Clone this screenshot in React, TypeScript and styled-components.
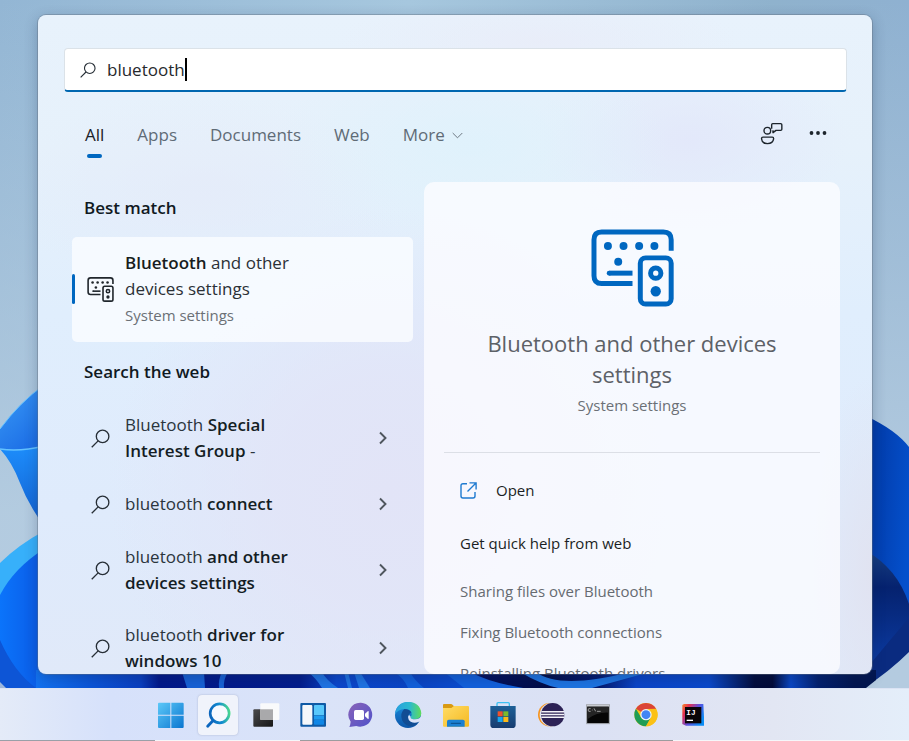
import React, { useState } from "react";
import styled, { createGlobalStyle } from "styled-components";

const GlobalStyle = createGlobalStyle`
  *, *::before, *::after { box-sizing: border-box; }
  body { margin: 0; background: #9fc0d9; font-family: "Open Sans", "Noto Sans", sans-serif; color: #1b2127; }
  button { font: inherit; color: inherit; border: 0; padding: 0; background: none; cursor: pointer; }
  svg { display: block; flex: none; }
`;

const blue = "#0067c0";

const Desktop = styled.div`
  display: grid;
  grid-template: minmax(0, 1fr) 53px / minmax(0, 1fr);
  height: 100vh;
  overflow: hidden;
`;

const WallpaperLayer = styled.div`
  grid-area: 1 / 1;
  min-height: 0;
  overflow: hidden;

  svg { width: 100%; height: 100%; }
`;

const Panel = styled.main`
  grid-area: 1 / 1;
  z-index: 1;
  display: flex;
  flex-direction: column;
  min-height: 0;
  margin: 15px 37px 14px 38px;
  overflow: hidden;
  border-radius: 8px;
  background:
    radial-gradient(200px 100px at 52% 20%, rgba(221, 242, 252, 0.7), transparent),
    radial-gradient(160px 90px at 78% 19%, rgba(226, 230, 250, 0.8), transparent),
    radial-gradient(200px 50px at 60% 4%, rgba(233, 234, 247, 0.6), transparent),
    radial-gradient(200px 100px at 20% 27%, rgba(229, 233, 248, 0.6), transparent),
    radial-gradient(280px 280px at 42% 72%, rgba(226, 228, 247, 1), rgba(226, 228, 247, 0.8) 40%, transparent),
    radial-gradient(60px 200px at 100% 85%, rgba(225, 227, 241, 1), transparent),
    linear-gradient(180deg, #e8f2fc 0%, #e6f1fb 20%, #e0eefd 45%, #dfebfc 75%, #e0e9f9 100%);
  box-shadow: 0 0 0 1px rgba(100, 112, 128, 0.4), 0 4px 14px rgba(20, 40, 80, 0.3);
`;

const SearchBox = styled.label`
  display: flex;
  align-items: center;
  flex: none;
  height: 44px;
  margin: 33px 25px 0 26px;
  padding: 0 16px 0 15px;
  border: 1px solid #dbe2e8;
  border-bottom: 2px solid #0067b0;
  border-radius: 4px;
  background: #fff;
`;

const SearchInput = styled.input`
  field-sizing: content;
  max-width: 90%;
  margin-left: 11px;
  padding: 1px 0 0;
  border: 0;
  outline: 0;
  background: transparent;
  caret-color: transparent;
  font: 17px/24px "Open Sans", "Noto Sans", sans-serif;
  color: #26292c;
`;

const Caret = styled.span`
  width: 2px;
  height: 23px;
  background: #000;
`;

const Toolbar = styled.div`
  display: flex;
  flex: none;
  align-items: center;
  height: 90px;
  padding: 0 45px 0 47px;
`;

const Tabs = styled.nav`
  display: flex;
  flex: 1;
  gap: 33px;
  margin-top: 6px;
`;

const Tab = styled.button<{ $active?: boolean }>`
  display: flex;
  flex-direction: column;
  align-items: center;
  gap: 6px;
  height: 36px;
  font-size: 17px;
  line-height: 26px;
  color: ${(p) => (p.$active ? "#1b2127" : "#5f6b76")};

  &::after {
    content: "";
    width: 15px;
    height: 4px;
    border-radius: 2px;
    background: ${(p) => (p.$active ? blue : "transparent")};
  }
`;

const TabLabel = styled.span`
  display: flex;
  align-items: center;
  gap: 7px;
`;

const ToolbarActions = styled.div`
  display: flex;
  align-items: center;
  gap: 26px;
  margin-bottom: 8px;
`;

const Columns = styled.div`
  display: grid;
  grid-template-columns: minmax(0, 341fr) minmax(0, 416fr);
  gap: 11px;
  flex: 1;
  min-height: 0;
  padding: 0 32px 0 34px;
`;

const Results = styled.section`
  min-height: 0;
  overflow: hidden;
`;

const GroupHeading = styled.h2<{ $first?: boolean }>`
  margin: 0;
  padding: ${(p) => (p.$first ? "13px 12px 16px" : "17px 12px 14px")};
  font-size: 17px;
  line-height: 26px;
  font-weight: 600;
  color: #10191f;
`;

const BestMatch = styled.button`
  display: flex;
  align-items: center;
  width: 100%;
  padding: 13px 16px 14px 0;
  border-radius: 5px;
  background: rgba(250, 252, 255, 0.82);
  text-align: left;
`;

const Accent = styled.span`
  width: 3px;
  height: 30px;
  margin-right: 12px;
  border-radius: 2px;
  background: ${blue};
`;

const MatchText = styled.span`
  display: block;
  width: 200px;
  margin-left: 11px;
  font-size: 17px;
  line-height: 26px;
  color: #2b3036;

  strong { font-weight: 600; color: #171c20; }
`;

const Caption = styled.span`
  display: block;
  font-size: 15px;
  line-height: 26px;
  color: #6b7076;
`;

const SuggestionRow = styled.button`
  display: flex;
  align-items: center;
  width: 100%;
  min-height: 54px;
  padding: 13px 25px 13px 19px;
  text-align: left;
  font-size: 17px;
  line-height: 26px;
  color: #2b353d;

  strong { font-weight: 600; color: #141d24; }
`;

const SuggestionText = styled.span`
  width: 180px;
  margin: 0 auto 0 15px;
`;

const Preview = styled.section`
  display: flex;
  flex-direction: column;
  min-height: 0;
  overflow: hidden;
  padding: 47px 20px 0;
  border-radius: 10px;
  background: rgba(252, 252, 255, 0.78);
`;

const PreviewHero = styled.header`
  display: flex;
  flex: none;
  flex-direction: column;
  align-items: center;
  padding-bottom: 34px;
  border-bottom: 1px solid #dcdfe6;
  text-align: center;
`;

const PreviewTitle = styled.h1`
  width: 320px;
  margin: 21px 0 2px;
  font-size: 22px;
  line-height: 31px;
  font-weight: 400;
  color: #5d6167;
`;

const OpenButton = styled.button`
  display: flex;
  align-items: center;
  flex: none;
  gap: 19px;
  margin: 24px 16px 0;
  font-size: 15px;
  line-height: 26px;
  color: #1b1f24;
`;

const HelpHeading = styled.h3`
  margin: 27px 16px 15px;
  font-size: 15px;
  line-height: 26px;
  font-weight: 400;
  color: #1b1f24;
`;

const HelpLink = styled.a`
  flex: none;
  margin: 0 16px;
  font-size: 15px;
  line-height: 41px;
  color: #666b71;
  text-decoration: none;
`;

const Taskbar = styled.footer`
  grid-area: 2 / 1;
  z-index: 1;
  display: flex;
  flex-direction: column;
  background: linear-gradient(90deg, #e4ebf8 0%, #d6e1fb 12%, #dae3f8 35%, #dbe1f4 65%, #e2e6f3 85%, #e4eefa 100%);
  border-top: 1px solid #dbe3f4;
`;

const TaskbarInner = styled.div`
  display: flex;
  flex: 1;
  justify-content: center;
  padding-right: 45px;
`;

const TaskbarItems = styled.div`
  display: flex;
  flex: 0 1 562px;
  justify-content: space-between;
  align-items: center;
`;

const TaskbarEdge = styled.div`
  height: 1px;
  background: linear-gradient(90deg, #9aa0a8 17%, #f5f7fa 17%, #f5f7fa 33%, #9c9c9e 33%, #9c9c9e 74%, #f5f7fa 74%);
`;

const AppButton = styled.button<{ $active?: boolean }>`
  display: grid;
  place-items: center;
  width: 40px;
  height: 40px;
  border-radius: 4px;
  background: ${(p) => (p.$active ? "#f0f3fb" : "transparent")};
  box-shadow: ${(p) => (p.$active ? "0 0 2px rgba(80, 90, 120, 0.35)" : "none")};
`;

const Wallpaper = () => (
  <WallpaperLayer>
    <svg viewBox="0 0 909 688" preserveAspectRatio="none" aria-hidden="true">
      <defs>
        <linearGradient id="sky" x1="0" x2="1">
          <stop offset="0" stopColor="#93b6d4" />
          <stop offset=".45" stopColor="#a6c7de" />
          <stop offset=".85" stopColor="#8fb2cd" />
          <stop offset="1" stopColor="#8fb1d1" />
        </linearGradient>
        <linearGradient id="haze" x1="0" x2="0" y1="0" y2="1">
          <stop offset="0" stopColor="#b9cfe0" stopOpacity="0" />
          <stop offset=".75" stopColor="#b9cfe2" stopOpacity=".85" />
          <stop offset="1" stopColor="#b4cbe0" />
        </linearGradient>
        <linearGradient id="petalA" x1="0" y1="0" x2=".6" y2="1">
          <stop offset="0" stopColor="#3a9bf6" />
          <stop offset="1" stopColor="#1d6fe6" />
        </linearGradient>
        <linearGradient id="petalB" x1="0" x2="0" y1="0" y2="1">
          <stop offset="0" stopColor="#1d8dfb" />
          <stop offset="1" stopColor="#1260d0" />
        </linearGradient>
        <linearGradient id="petalC" x1="0" x2="1">
          <stop offset="0" stopColor="#0b74fb" />
          <stop offset="1" stopColor="#0b50dc" />
        </linearGradient>
        <linearGradient id="petalR" x1="0" x2="1" y1="0" y2=".4">
          <stop offset="0" stopColor="#01339c" />
          <stop offset="1" stopColor="#0450cc" />
        </linearGradient>
        <linearGradient id="petalRInner" x1="0" x2="0" y1="0" y2="1">
          <stop offset="0" stopColor="#173f80" />
          <stop offset=".3" stopColor="#05226f" />
          <stop offset="1" stopColor="#0c3da6" />
        </linearGradient>
        <linearGradient id="floor" gradientUnits="userSpaceOnUse" x1="0" x2="909" y1="0" y2="0">
          <stop offset=".04" stopColor="#1272f0" />
          <stop offset=".1" stopColor="#0b55d8" />
          <stop offset=".155" stopColor="#0a3fc0" />
          <stop offset=".175" stopColor="#02188a" />
          <stop offset=".33" stopColor="#021c8c" />
          <stop offset=".37" stopColor="#0b47cc" />
          <stop offset=".46" stopColor="#0a44c4" />
          <stop offset=".51" stopColor="#0a4cd0" />
          <stop offset=".53" stopColor="#020f5c" />
          <stop offset=".6" stopColor="#020c48" />
          <stop offset=".66" stopColor="#041a70" />
          <stop offset=".7" stopColor="#0a44c8" />
          <stop offset=".78" stopColor="#0a49cb" />
          <stop offset=".83" stopColor="#020c3c" />
          <stop offset=".85" stopColor="#020a38" />
          <stop offset=".87" stopColor="#0a47c4" />
          <stop offset=".9" stopColor="#03206e" />
          <stop offset=".94" stopColor="#02154f" />
        </linearGradient>
      </defs>
      <rect width="909" height="688" fill="url(#sky)" />
      <rect width="909" height="688" fill="url(#haze)" />
      <path d="M44 385Q20 402 0 429V449Q20 452 44 447Z" fill="url(#petalA)" />
      <path d="M0 449Q12 462 20 483T44 526V446Q20 452 0 449Z" fill="url(#petalB)" />
      <path d="M0 449Q20 452 44 446" fill="none" stroke="#63c2ff" strokeWidth="1.5" />
      <path d="M0 429Q20 402 44 385" fill="none" stroke="#63c2ff" />
      <path d="M44 531Q18 545 0 563V688H60V531Z" fill="#37b0fa" />
      <path d="M44 549Q14 568 0 595V688H60V545Z" fill="url(#petalC)" />
      <path d="M0 640Q14 672 36 688H0Z" fill="#0d55d6" />
      <path d="M0 682L6 688H0Z" fill="#9db7dc" />
      <path d="M866 416Q896 430 909 447V640Q890 660 864 688H860V416Z" fill="url(#petalR)" />
      <path d="M866 551Q897 568 909 604V620Q890 655 866 672Z" fill="url(#petalRInner)" />
      <path d="M909 618Q890 640 872 662L840 688H864Q890 671 909 652Z" fill="#0a2b80" />
      <path d="M36 670H876V680L866 688H36Z" fill="url(#floor)" />
      <path d="M182 672H204L205 688H187ZM219 688Q218 680 222 672H228Q223 680 224 688Z" fill="#1762d6" />
      <path d="M308 672Q316 678 322 688H338Q326 680 322 672ZM344 672L348 688H352L348 672ZM354 672L359 688H370L360 672Z" fill="#1f74e4" />
      <path d="M394 672Q404 678 408 688H424Q414 680 410 672ZM444 672L464 688H590L640 672Q600 688 560 692Q500 688 470 672Z" fill="#1260dc" />
      <path d="M520 672Q560 696 592 688L650 672H630Q560 690 536 672Z" fill="#1d74e2" />
    </svg>
  </WallpaperLayer>
);

const SearchIcon = ({ size }: { size: number }) => (
  <svg width={size} height={size} viewBox="0 0 20 20" fill="none" stroke="#262e36" strokeWidth="1.4" aria-hidden="true">
    <circle cx="12.2" cy="7.8" r="6.6" />
    <path d="M7.5 12.5L.8 19.2" />
  </svg>
);

const DevicesIcon = ({ width, height, color }: { width: number; height: number; color: string }) => (
  <svg width={width} height={height} viewBox="30 26 250 234" fill="none" stroke={color} strokeWidth="15" aria-hidden="true">
    <path d="M155 189.500H62Q39 189.500 39 166V58Q39 34.500 62 34.500H248Q271.500 34.500 271.500 58V91" />
    <path d="M85 158.500H155" strokeLinecap="butt" />
    <circle cx="85" cy="158.500" r="7.500" fill={color} stroke="none" />
    <rect x="178.500" y="112.500" width="93" height="139" rx="16" />
    <circle cx="225" cy="158.500" r="15.500" />
    <g fill={color} stroke="none">
      <circle cx="81" cy="77" r="12" />
      <circle cx="128" cy="77" r="12" />
      <circle cx="175" cy="77" r="12" />
      <circle cx="221" cy="77" r="12" />
      <circle cx="112" cy="124" r="12" />
      <circle cx="225" cy="213" r="15.500" />
    </g>
  </svg>
);

const ChevronDown = () => (
  <svg width="11" height="7" viewBox="0 0 11 7" fill="none" stroke="#6f7a84" aria-hidden="true">
    <path d="M.7 1L5.500 5.800L10.300 1" />
  </svg>
);

const ChevronRight = () => (
  <svg width="10" height="14" viewBox="0 0 10 14" fill="none" stroke="#4f565e" strokeWidth="1.900" aria-hidden="true">
    <path d="M2 1.500L7.500 7L2 12.500" />
  </svg>
);

const FeedbackIcon = () => (
  <svg width="23" height="23" viewBox="0 0 69 69" fill="none" stroke="#1d252c" strokeWidth="4.200" strokeLinejoin="round" aria-hidden="true">
    <circle cx="22" cy="26" r="10" />
    <path d="M9 45.500H37Q41 45.500 41 50Q39 65 22.500 65Q6 65 4.500 50Q4.500 45.500 9 45.500Z" />
    <path d="M35 20V8Q35 5 38 5H62Q65.500 5 65.500 8V22Q65.500 25 62 25H48L39 32V25" />
  </svg>
);

const MoreIcon = () => (
  <svg width="18" height="6" viewBox="0 0 18 6" fill="#1d252c" aria-hidden="true">
    <circle cx="2.500" cy="3" r="1.900" />
    <circle cx="9" cy="3" r="1.900" />
    <circle cx="15.500" cy="3" r="1.900" />
  </svg>
);

const OpenIcon = () => (
  <svg width="17" height="17" viewBox="0 0 17 17" fill="none" stroke="#1f7ad0" strokeWidth="1.400" aria-hidden="true">
    <path d="M7 1.700H3Q1 1.700 1 3.700V14Q1 16 3 16H13Q15 16 15 14V10" />
    <path d="M9.500 .9H16.100V7.500M16 1L7.500 9.500" />
  </svg>
);

const AppIcon = ({ x, children }: { x: number; children: React.ReactNode }) => (
  <svg width="28" height="28" viewBox={`${x - 42} 63 84 84`} aria-hidden="true">
    {children}
  </svg>
);

const apps: { name: string; active?: boolean; icon: React.ReactNode }[] = [
  {
    name: "Start",
    icon: (
      <AppIcon x={93}>
        <defs>
          <linearGradient id="win" x1="54" y1="68" x2="131" y2="144" gradientUnits="userSpaceOnUse">
            <stop stopColor="#5cc8f8" />
            <stop offset="1" stopColor="#0a76d0" />
          </linearGradient>
        </defs>
        <path fill="url(#win)" d="M54 71Q54 68 57 68H91V104H54ZM94 68H128Q131 68 131 71V104H94ZM54 107H91V144H57Q54 144 54 141ZM94 107H131V141Q131 144 128 144H94Z" />
      </AppIcon>
    ),
  },
  {
    name: "Search",
    active: true,
    icon: (
      <AppIcon x={235}>
        <defs>
          <linearGradient id="lens" x1="206" y1="110" x2="273" y2="98" gradientUnits="userSpaceOnUse">
            <stop stopColor="#0b5fb8" />
            <stop offset=".55" stopColor="#118bd0" />
            <stop offset="1" stopColor="#4fe08a" />
          </linearGradient>
        </defs>
        <circle cx="240" cy="100" r="28.500" fill="#f7faff" stroke="url(#lens)" strokeWidth="8" />
        <path d="M219 123L204 139" stroke="#0b66bf" strokeWidth="8.500" strokeLinecap="round" />
      </AppIcon>
    ),
  },
  {
    name: "Task view",
    icon: (
      <AppIcon x={377}>
        <defs>
          <linearGradient id="tv" x1="0" y1="0" x2="1" y2="1">
            <stop stopColor="#4a4a4c" />
            <stop offset="1" stopColor="#161617" />
          </linearGradient>
        </defs>
        <rect x="339" y="88" width="59" height="52" rx="3" fill="url(#tv)" />
        <rect x="360" y="70" width="57" height="50" rx="3" fill="#fbfbfb" opacity=".94" />
        <rect x="360" y="88" width="38" height="32" fill="#a9a9ab" />
      </AppIcon>
    ),
  },
  {
    name: "Widgets",
    icon: (
      <AppIcon x={521}>
        <rect x="483" y="69" width="77" height="71" rx="3" fill="#0f5aa5" />
        <rect x="489" y="75" width="30" height="59" rx="3" fill="#f4f7fa" />
        <rect x="524" y="75" width="30" height="31" rx="2" fill="#58c8fb" />
        <rect x="524" y="107" width="30" height="12" fill="#1e9cf0" />
        <rect x="524" y="120" width="30" height="14" rx="2" fill="#0f86e6" />
      </AppIcon>
    ),
  },
  {
    name: "Chat",
    icon: (
      <AppIcon x={662}>
        <defs>
          <linearGradient id="chat" x1="0" y1="0" x2="1" y2="1">
            <stop stopColor="#8a63b8" />
            <stop offset="1" stopColor="#4f52c9" />
          </linearGradient>
        </defs>
        <path fill="url(#chat)" d="M662 68A36 36 0 1 1 648 138L627 141Q630 134 631 125A36 36 0 0 1 662 68Z" />
        <rect x="641" y="90" width="30" height="30" rx="5" fill="#fff" />
        <path d="M674 101L683 93Q685 92 685 95V115Q685 118 683 117L674 109Z" fill="#fff" />
      </AppIcon>
    ),
  },
  {
    name: "Edge",
    icon: (
      <AppIcon x={805}>
        <defs>
          <linearGradient id="edgeTop" x1="766" y1="90" x2="845" y2="90" gradientUnits="userSpaceOnUse">
            <stop stopColor="#2a9fdf" />
            <stop offset=".55" stopColor="#2bb9cf" />
            <stop offset="1" stopColor="#5fdc5a" />
          </linearGradient>
          <linearGradient id="edgeLeft" x1="0" y1="0" x2="0" y2="1">
            <stop stopColor="#1b8fe0" />
            <stop offset="1" stopColor="#0c55a8" />
          </linearGradient>
        </defs>
        <circle cx="805" cy="105" r="39" fill="url(#edgeLeft)" />
        <path fill="url(#edgeTop)" d="M766 102Q770 67 806 66Q841 67 845 100Q844 117 826 118Q811 118 813 110Q818 106 815 97Q808 87 794 87Q776 88 766 102Z" />
        <path fill="#114d94" d="M794 87Q779 100 788 122Q798 141 822 138Q833 133 838 124Q822 131 811 123Q802 115 808 103Q812 98 815 97Q808 87 794 87Z" />
        <path fill="#dbe3f8" d="M845 106Q842 118 826 118Q811 118 813 110Q808 103 806 108Q803 118 813 125Q825 131 838 125Q840 127 848 118Z" />
      </AppIcon>
    ),
  },
  {
    name: "File Explorer",
    icon: (
      <AppIcon x={78}>
        <defs>
          <linearGradient id="folder" x1="0" y1="0" x2="1" y2="1">
            <stop stopColor="#ffdc66" />
            <stop offset="1" stopColor="#f5b921" />
          </linearGradient>
        </defs>
        <path d="M39 75Q39 72 42 72H62Q66 72 69 76L73 80V92H39Z" fill="#d99a12" />
        <path d="M39 84H64L72 78H114Q117 78 117 81V137Q117 140 114 140H42Q39 140 39 137Z" fill="url(#folder)" />
        <path d="M51 140V124Q51 119 56 119H99Q104 119 104 124V140Z" fill="#1a80d2" />
        <rect x="62" y="128" width="31" height="4" rx="2" fill="#0c5595" />
      </AppIcon>
    ),
  },
  {
    name: "Microsoft Store",
    icon: (
      <AppIcon x={219}>
        <defs>
          <linearGradient id="store" x1="0" y1="0" x2="0" y2="1">
            <stop stopColor="#1e6097" />
            <stop offset="1" stopColor="#173c70" />
          </linearGradient>
        </defs>
        <path d="M201 82V71Q201 68 204 68H235Q238 68 238 71V82" fill="none" stroke="#3cc0f2" strokeWidth="4" />
        <path d="M181 78H257V134Q257 144 247 144H191Q181 144 181 134Z" fill="url(#store)" />
        <rect x="203" y="94" width="15" height="15" fill="#f0522a" />
        <rect x="220" y="94" width="15" height="15" fill="#7dba2a" />
        <rect x="203" y="111" width="15" height="15" fill="#1aa5ee" />
        <rect x="220" y="111" width="15" height="15" fill="#fcba18" />
      </AppIcon>
    ),
  },
  {
    name: "Eclipse",
    icon: (
      <AppIcon x={362}>
        <circle cx="358" cy="104" r="35" fill="#f7941e" />
        <circle cx="363" cy="104" r="35" fill="#dfe2ef" />
        <circle cx="367" cy="104" r="35" fill="#2c2255" />
        <path d="M333 95H401M332 103.500H402M333 112H401" stroke="#f3f2f8" strokeWidth="4.500" />
      </AppIcon>
    ),
  },
  {
    name: "Command Prompt",
    icon: (
      <AppIcon x={504}>
        <rect x="470" y="74" width="68" height="57" fill="#050505" stroke="#a9adb3" strokeWidth="3" />
        <rect x="471" y="74" width="66" height="6" fill="#c9ccd1" />
        <path d="M472 118Q500 96 536 98V80H472Z" fill="#242424" />
        <path d="M482 86H477Q475 86 475 88V92Q475 94 477 94H482M487 88V89M487 92V93M492 85L497 94M501 94H512" stroke="#d8d8d8" strokeWidth="2" fill="none" />
      </AppIcon>
    ),
  },
  {
    name: "Chrome",
    icon: (
      <AppIcon x={646}>
        <circle cx="646" cy="104" r="35" fill="#fbc116" />
        <path d="M646 104L615.700 86.500A35 35 0 0 1 676.300 86.500L646 87Z" fill="#db4437" />
        <path d="M615.700 86.500A35 35 0 0 0 646 139L661 112L646 104L631 112Z" fill="#1f9d55" />
        <path d="M646 87H676.300A35 35 0 0 1 646 139L661 112.500Z" fill="#fbc116" />
        <circle cx="646" cy="104" r="17" fill="#f2f5f8" />
        <circle cx="646" cy="104" r="13.500" fill="#4285f4" />
      </AppIcon>
    ),
  },
  {
    name: "IntelliJ IDEA",
    icon: (
      <AppIcon x={789}>
        <defs>
          <linearGradient id="ij" x1="0" y1="0" x2="1" y2=".6">
            <stop stopColor="#f58a2a" />
            <stop offset=".25" stopColor="#e8304f" />
            <stop offset=".6" stopColor="#5a50e0" />
            <stop offset="1" stopColor="#0a8cf5" />
          </linearGradient>
        </defs>
        <path d="M757 75L762 72H820L822 110V137H768L757 132Z" fill="url(#ij)" />
        <rect x="765" y="81" width="49" height="49" fill="#0a0508" />
        <rect x="770" y="119" width="19" height="4" fill="#fff" />
        <text x="769" y="105" fill="#fff" fontSize="23" fontWeight="700" fontFamily="Liberation Mono, monospace">IJ</text>
      </AppIcon>
    ),
  },
];

const tabs = ["All", "Apps", "Documents", "Web", "More"];

const suggestions: { name: string; label: React.ReactNode }[] = [
  { name: "sig", label: <>Bluetooth <strong>Special Interest Group</strong> -</> },
  { name: "connect", label: <>bluetooth <strong>connect</strong></> },
  { name: "devices", label: <>bluetooth <strong>and other devices settings</strong></> },
  { name: "driver", label: <>bluetooth <strong>driver for windows 10</strong></> },
];

const helpTopics = ["Sharing files over Bluetooth", "Fixing Bluetooth connections", "Reinstalling Bluetooth drivers"];

export default function App() {
  const [query, setQuery] = useState("bluetooth");
  const [tab, setTab] = useState("All");

  return (
    <Desktop>
      <GlobalStyle />
      <Wallpaper />
      <Panel>
        <SearchBox>
          <SearchIcon size={16} />
          <SearchInput aria-label="Search" value={query} onChange={(e) => setQuery(e.target.value)} />
          <Caret />
        </SearchBox>
        <Toolbar>
          <Tabs>
            {tabs.map((t) => (
              <Tab key={t} $active={t === tab} onClick={() => setTab(t)}>
                <TabLabel>
                  {t}
                  {t === "More" && <ChevronDown />}
                </TabLabel>
              </Tab>
            ))}
          </Tabs>
          <ToolbarActions>
            <button aria-label="Feedback"><FeedbackIcon /></button>
            <button aria-label="More options"><MoreIcon /></button>
          </ToolbarActions>
        </Toolbar>
        <Columns>
          <Results>
            <GroupHeading $first>Best match</GroupHeading>
            <BestMatch>
              <Accent />
              <DevicesIcon width={27} height={25} color="#20262c" />
              <MatchText>
                <strong>Bluetooth</strong> and other devices settings
                <Caption>System settings</Caption>
              </MatchText>
            </BestMatch>
            <GroupHeading>Search the web</GroupHeading>
            {suggestions.map((s) => (
              <SuggestionRow key={s.name}>
                <SearchIcon size={19} />
                <SuggestionText>{s.label}</SuggestionText>
                <ChevronRight />
              </SuggestionRow>
            ))}
          </Results>
          <Preview>
            <PreviewHero>
              <DevicesIcon width={83} height={78} color={blue} />
              <PreviewTitle>Bluetooth and other devices settings</PreviewTitle>
              <Caption>System settings</Caption>
            </PreviewHero>
            <OpenButton>
              <OpenIcon />
              Open
            </OpenButton>
            <HelpHeading>Get quick help from web</HelpHeading>
            {helpTopics.map((h) => (
              <HelpLink key={h} href="#">{h}</HelpLink>
            ))}
          </Preview>
        </Columns>
      </Panel>
      <Taskbar>
        <TaskbarInner>
          <TaskbarItems>
            {apps.map((a) => (
              <AppButton key={a.name} aria-label={a.name} $active={a.active}>
                {a.icon}
              </AppButton>
            ))}
          </TaskbarItems>
        </TaskbarInner>
        <TaskbarEdge />
      </Taskbar>
    </Desktop>
  );
}
